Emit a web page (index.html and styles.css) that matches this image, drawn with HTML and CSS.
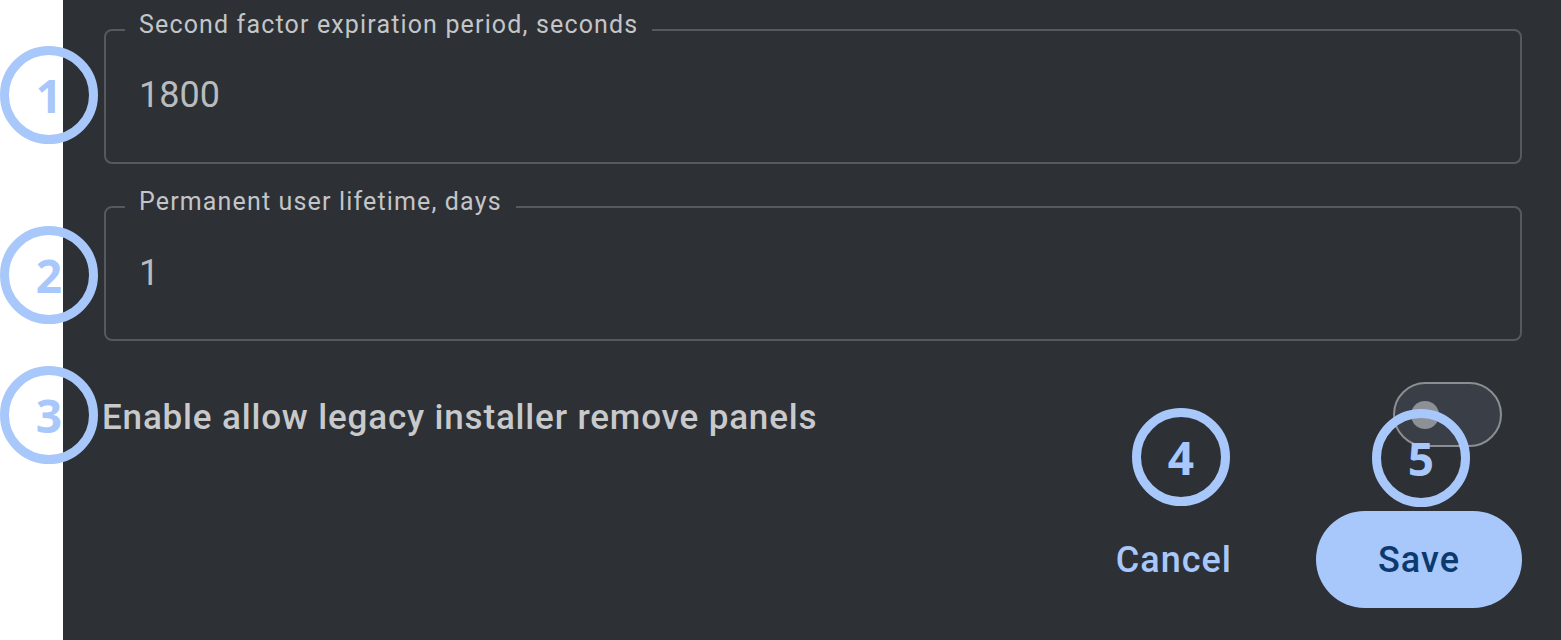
FILE: index.html
```html
<!DOCTYPE html>
<html lang="en">
<head>
<meta charset="utf-8">
<title>Settings</title>
<link rel="stylesheet" href="styles.css">
</head>
<body>
<div class="page">
  <main class="panel">
    <fieldset class="field">
      <legend class="field-label">Second factor expiration period, seconds</legend>
      <div class="field-value">1800</div>
    </fieldset>
    <fieldset class="field field-second">
      <legend class="field-label">Permanent user lifetime, days</legend>
      <div class="field-value field-value-low">1</div>
    </fieldset>
    <div class="switch-row">
      <span class="switch-label">Enable allow legacy installer remove panels</span>
      <span class="switch"><span class="switch-thumb"></span></span>
    </div>
    <div class="actions">
      <button class="btn btn-text">Cancel</button>
      <button class="btn btn-filled">Save</button>
    </div>
  </main>
  <div class="marker m1">1</div>
  <div class="marker m2">2</div>
  <div class="marker m3">3</div>
  <div class="marker m4">4</div>
  <div class="marker m5">5</div>
</div>
</body>
</html>
```
FILE: styles.css
```css
html, body {
  margin: 0;
  padding: 0;
  background: #ffffff;
}

.page {
  position: relative;
  width: 1561px;
  height: 640px;
  overflow: hidden;
  font-family: Roboto, "Liberation Sans", sans-serif;
}

.panel {
  margin-left: 63px;
  height: 640px;
  box-sizing: border-box;
  padding: 10px 39px 0 41px;
  background: #2d3034;
  display: flex;
  flex-direction: column;
}

.field {
  margin: 0;
  padding: 0 0 22px 0;
  border: 2px solid #56595d;
  border-radius: 8px;
  min-width: 0;
}

.field-second {
  margin-top: 23px;
}

.field-label {
  margin-left: 19px;
  padding: 0 14px 10px;
  font-size: 25px;
  line-height: 30px;
  letter-spacing: 1.15px;
  color: #c3c5c8;
}

.field-value {
  padding-left: 33px;
  line-height: 90px;
  font-size: 36px;
  color: #b9bbbe;
}

.field-value-low {
  padding-top: 3px;
  line-height: 87px;
}

.switch-row {
  margin-top: 41px;
  padding-right: 20px;
  height: 65px;
  display: flex;
  align-items: center;
  justify-content: space-between;
}

.switch-label {
  font-size: 35px;
  font-weight: 500;
  letter-spacing: 0.83px;
  color: #c8c9cb;
  margin-left: -2px;
  padding-top: 6px;
}

.switch {
  width: 109px;
  height: 65px;
  box-sizing: border-box;
  border: 2px solid #8b8e93;
  border-radius: 33px;
  background: #3a3e46;
  display: flex;
  align-items: center;
  padding-left: 16px;
}

.switch-thumb {
  width: 28px;
  height: 28px;
  border-radius: 50%;
  background: #8d9095;
}

.actions {
  margin-top: 64px;
  display: flex;
  justify-content: flex-end;
  align-items: center;
  gap: 60px;
}

.btn {
  font-family: Roboto, "Liberation Sans", sans-serif;
  font-size: 36px;
  font-weight: 500;
  letter-spacing: 1px;
  height: 97px;
  border: none;
  cursor: pointer;
}

.btn-text {
  background: none;
  color: #a8c7fa;
  padding: 0 24px;
}

.btn-filled {
  width: 206px;
  border-radius: 49px;
  background: #a8c7fa;
  color: #0b3a6f;
  padding: 0;
}

.marker {
  position: absolute;
  width: 98px;
  height: 98px;
  box-sizing: border-box;
  border: 9.5px solid #a8c7fa;
  border-radius: 50%;
  display: flex;
  align-items: center;
  justify-content: center;
  font-family: "Open Sans", "Noto Sans", sans-serif;
  font-weight: 700;
  font-size: 46px;
  line-height: 1;
  color: #a8c7fa;
}

.m1 { left: 0; top: 46px; }
.m2 { left: 0; top: 226px; }
.m3 { left: 0; top: 366px; }
.m4 { left: 1132px; top: 408px; }
.m5 { left: 1372px; top: 409px; }
```
